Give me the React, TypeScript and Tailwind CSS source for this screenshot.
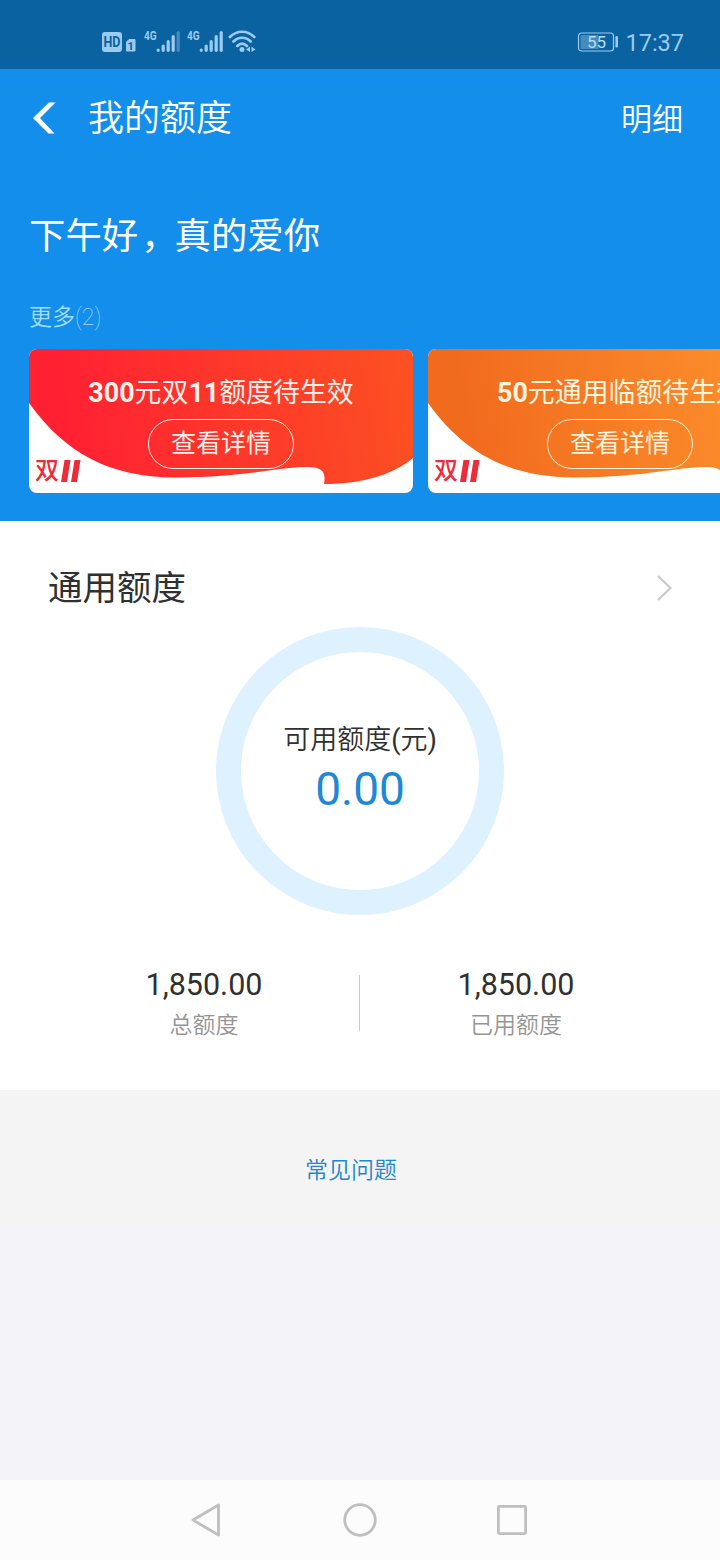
import React from "react";

const fontStack = "font-['Roboto','Noto_Sans_CJK_SC',sans-serif]";

const SignalBars = ({ weakLast = false }: { weakLast?: boolean }) => (
  <div className="flex h-6 w-[42px] shrink-0">
    <span className="mt-px w-3 font-['Roboto'] text-[12px] font-bold leading-3">
      <span className="inline-block origin-left scale-x-[.84]">4G</span>
    </span>
    <svg width="26" height="24" viewBox="0 0 26 24" stroke="currentColor" strokeWidth="3.2" strokeLinecap="round">
      <path d="M2.2 21v.3M7.2 17v4.3M12.2 12.5v8.8M17.2 7.5v13.8" />
      <path d="M22.2 3.5v17.8" opacity={weakLast ? 0.4 : 1} />
    </svg>
  </div>
);

const StatusBar = () => (
  <div className="flex h-[69px] items-start justify-between bg-[#0b62a1] pl-[101px] pr-9 pt-[29px] text-[#9acbf0]">
    <div className="flex">
      <svg width="36" height="25" viewBox="0 0 36 25">
        <rect x="1" y="3" width="20" height="20" rx="3" fill="currentColor" />
        <text x="11" y="18" textAnchor="middle" textLength="17" lengthAdjust="spacingAndGlyphs" fontFamily="Roboto" fontSize="14" fontWeight="700" fill="#0b62a1">
          HD
        </text>
        <path d="M28 10.5h6v11.5h-8.5v-9z" fill="currentColor" stroke="currentColor" strokeLinejoin="round" />
        <text x="29.6" y="20.5" textAnchor="middle" fontFamily="Roboto" fontSize="11" fontWeight="700" fill="#0b62a1">
          1
        </text>
      </svg>
      <div className="ml-[7px] flex gap-px">
        <SignalBars weakLast />
        <SignalBars />
      </div>
      <svg className="-ml-px" width="29" height="25" viewBox="0 0 29 25" fill="none" stroke="currentColor" strokeWidth="2.7" strokeLinecap="round">
        <path d="M1.9 8c7-7 17.4-7 24.4 0M5.5 12.5c5-5 12.2-5 17.2 0M9.3 17c3-3 6.6-3 9.6 0" />
        <circle cx="14" cy="20.5" r="2.5" fill="currentColor" stroke="none" />
        <path d="M22 17.5v5.5l-4-2.6zM23.5 17.5v5.5l4-2.6z" fill="currentColor" stroke="none" />
      </svg>
    </div>
    <div className="flex">
      <svg className="mt-[3px]" width="42" height="20" viewBox="0 0 42 20">
        <rect x="2.500" y="1" width="35" height="18" rx="3" fill="none" stroke="currentColor" strokeWidth="1.2" />
        <rect x="4.500" y="3" width="18" height="14" rx="1" fill="currentColor" opacity=".4" />
        <rect x="39.400" y="4" width="2.6" height="11.5" rx="1.2" fill="currentColor" />
        <text x="20.5" y="16" textAnchor="middle" fontFamily="Roboto" fontSize="17" fill="#b9dcf6">
          55
        </text>
      </svg>
      <span className="ml-[7px] text-[23.5px] leading-7">17:37</span>
    </div>
  </div>
);

interface CouponProps {
  id: string;
  title: React.ReactNode;
  from: string;
  to: string;
  textColor: string;
}

const Coupon: React.FC<CouponProps> = ({ id, title, from, to, textColor }) => (
  <div className={`relative h-36 w-96 shrink-0 overflow-hidden rounded-lg bg-white ${textColor}`}>
    <svg className="absolute inset-0" width="384" height="144" viewBox="0 0 384 144">
      <defs>
        <linearGradient id={id} gradientUnits="userSpaceOnUse" x1="0" y1="80" x2="384" y2="10">
          <stop offset="0.1" stopColor={from} />
          <stop offset="1" stopColor={to} />
        </linearGradient>
      </defs>
      <path
        d="M0 0H384V109C365 125 335 135 295 135C297 124 294 118 279 118C247 118 220 128 146 128.500C80 128 36 104 0 54Z"
        fill={`url(#${id})`}
      />
    </svg>
    <div className="relative flex flex-col items-center pt-[26px]">
      <p className="whitespace-nowrap text-[26.9px] leading-9">{title}</p>
      <button className="mt-2 h-[50px] w-[146px] rounded-full border border-current text-[25px] leading-[46px]">
        查看详情
      </button>
    </div>
    <div className="absolute bottom-[8px] left-[6px] flex items-center text-[#ed2b39]">
      <span className="text-[24px] font-medium leading-7">双</span>
      <svg className="ml-[2px]" width="20" height="22" viewBox="0 0 20 22" fill="currentColor">
        <path d="M3.500 0h6l-3.500 22H0zM13.500 0h6l-3.500 22h-6z" />
      </svg>
    </div>
  </div>
);

const Amount = ({ value, label }: { value: string; label: string }) => (
  <div className="flex w-[312px] flex-col items-center">
    <span className="text-[30.5px] leading-9 text-[#303030]">{value}</span>
    <span className="mt-[5px] text-[23px] font-[350] leading-9 text-[#959595]">{label}</span>
  </div>
);

export default function App() {
  return (
    <div className={`flex h-[1560px] w-[720px] flex-col overflow-hidden bg-[#f4f3f9] ${fontStack}`}>
      <StatusBar />

      <div className="h-[452px] bg-[#138eeb] text-white">
        <header className="flex h-[97px] items-center justify-between pl-8 pr-[37px]">
          <div className="flex items-center">
            <svg width="24" height="34" viewBox="0 0 24 34" fill="currentColor">
              <path d="M17 1.500H23.500L8 17 22.500 32.500h-6L1 17z" />
            </svg>
            <h1 className="ml-8 pt-0.5 text-[36px] font-[350] leading-[48px]">我的额度</h1>
          </div>
          <span className="pt-1 text-[31px] font-[350] leading-10">明细</span>
        </header>

        <h2 className="ml-[29px] mt-[47px] text-[36.4px] leading-[48px]">
          下午好<span className="relative left-[3px]">，</span>真的爱你
        </h2>
        <p className="ml-[29px] mt-[41px] text-[23px] font-[350] leading-8 text-[#a2dcfb]">
          更多<span className="font-thin">(2)</span>
        </p>

        <div className="mt-[15px] flex gap-[15px] pl-[29px]">
          <Coupon
            id="coupon-red"
            from="#ff2132"
            to="#fc5122"
            textColor="text-[#fff0e8]"
            title={
              <>
                <b>300</b>元双<b>11</b>额度待生效
              </>
            }
          />
          <Coupon
            id="coupon-orange"
            from="#f16b1e"
            to="#ff962f"
            textColor="text-[#fff4dc]"
            title={
              <>
                <b>50</b>元通用临额待生效
              </>
            }
          />
        </div>
      </div>

      <section className="h-[569px] bg-white pt-[43px]">
        <div className="flex h-12 items-center justify-between pl-12 pr-[47px]">
          <h3 className="text-[34.5px] leading-[48px] text-[#303030]">通用额度</h3>
          <svg width="17" height="28" viewBox="0 0 17 28" fill="none" stroke="#c8c8cc" strokeWidth="2">
            <path d="M2 2l12.500 12L2 26" />
          </svg>
        </div>
        <div className="mx-auto mt-[15px] flex size-72 flex-col items-center rounded-full border-[25px] border-[#def1ff] pt-[70px]">
          <span className="text-[27px] font-[350] leading-9 text-[#303030]">
            可用额度<span className="font-normal">(</span>元<span className="font-normal">)</span>
          </span>
          <span className="mt-[3px] text-[46px] leading-[56px] text-[#1e88d8]">0.00</span>
        </div>
        <div className="ml-12 mt-[52px] flex w-[625px] items-start">
          <Amount value="1,850.00" label="总额度" />
          <div className="-ml-px mt-2 h-14 w-px bg-[#ccc]" />
          <Amount value="1,850.00" label="已用额度" />
        </div>
      </section>

      <div className="h-[135px] bg-[#f4f4f4] pr-[18px] pt-[63px] text-center text-[23px] font-[350] leading-9 text-[#2088cc]">
        常见问题
      </div>

      <nav className="mt-auto flex h-20 items-center bg-[#fcfcfc] pl-[190px]">
        <svg width="340" height="40" viewBox="0 0 340 40" fill="none" stroke="#bfbfbf" strokeWidth="2.8" strokeLinejoin="round">
          <path d="M28.500 5v30L3 20z" />
          <circle cx="170" cy="20" r="15.3" />
          <rect x="308.4" y="6.4" width="27.2" height="27.2" rx="1" />
        </svg>
      </nav>
    </div>
  );
}
